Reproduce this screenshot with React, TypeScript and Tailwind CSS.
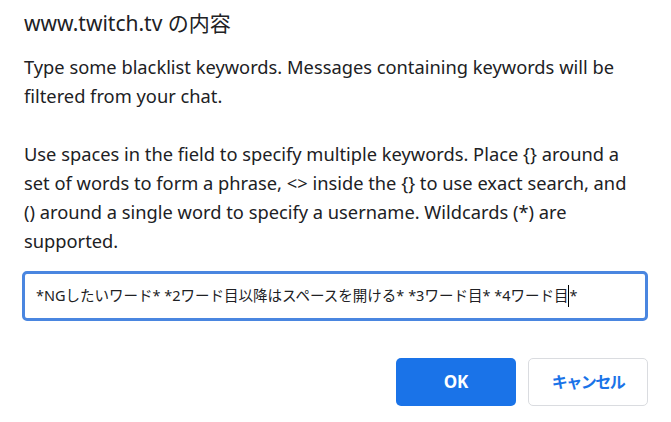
import React from "react";

export default function App() {
  const font = { fontFamily: '"Segoe UI", "Noto Sans", "Noto Sans CJK JP", sans-serif' };
  return (
    <div className="w-[671px] h-[422px] bg-white text-[#202124] overflow-hidden" style={font}>
      <div className="pl-6 pr-5 pt-[6px]">
        <div className="text-[21px] leading-[34px]">www.twitch.tv の内容</div>
        <div className="mt-[12px] text-[18.3px] leading-[29px] whitespace-nowrap">
          <div>Type some blacklist keywords. Messages containing keywords will be</div>
          <div>filtered from your chat.</div>
          <div className="h-[29px]" />
          <div>Use spaces in the field to specify multiple keywords. Place {"{}"} around a</div>
          <div>set of words to form a phrase, &lt;&gt; inside the {"{}"} to use exact search, and</div>
          <div>() around a single word to specify a username. Wildcards (*) are</div>
          <div>supported.</div>
        </div>
        <div className="mt-[16px] w-[626px] h-[50px] -ml-[2px] rounded-[5px] border-[3px] border-[#4a86e0] flex items-center pl-[11px] text-[14.5px] whitespace-nowrap">
          <span>*NGしたいワード* *2ワード目以降はスペースを開ける* *3ワード目* *4ワード目</span>
          <span className="inline-block w-px h-[22px] bg-black" />
          <span>*</span>
        </div>
        <div className="mt-[37px] flex justify-end gap-3 pr-[3px]">
          <button className="w-[120px] h-[48px] rounded-[5px] bg-[#1a73e8] text-white font-bold text-[17px]">OK</button>
          <button className="w-[120px] h-[48px] rounded-[5px] border border-[#dadce0] bg-white text-[#1a73e8] font-bold text-[16px] tracking-[-1.5px]">キャンセル</button>
        </div>
      </div>
    </div>
  );
}
